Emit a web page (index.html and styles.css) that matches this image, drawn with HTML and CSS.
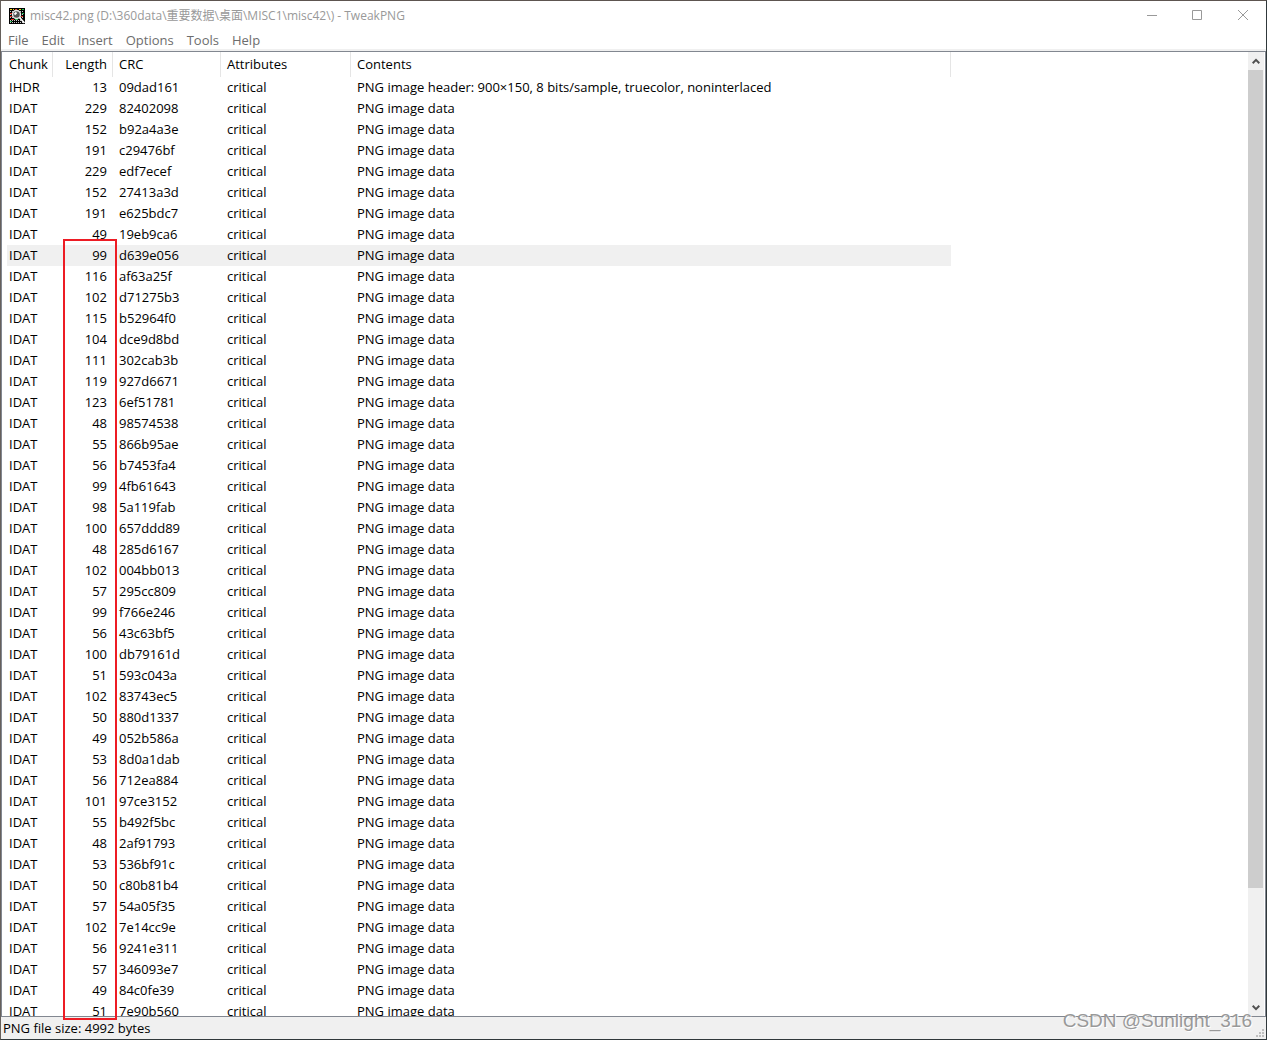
FILE: index.html
```html
<!DOCTYPE html>
<html lang="en">
<head>
<meta charset="utf-8">
<title>misc42.png - TweakPNG</title>
<link rel="stylesheet" href="styles.css">
</head>
<body>
<div class="window">
  <header class="titlebar">
    <svg class="app-icon" width="16" height="16" viewBox="0 0 16 16" shape-rendering="crispEdges" aria-hidden="true">
      <rect width="16" height="16" fill="#000"/>
      <path d="M1 3.500h14M1 6.500h14M1 9.500h14M1 12.500h14M1 14.500h14" stroke="#c8c8c8" stroke-dasharray="1 1"/>
      <path d="M1 1.500h2M4 1.500h1M10 1.500h2" stroke="#f0d820"/>
      <path d="M6 1.500h2M1 5.500h2M1 8.500h2M2 11.500h3M12 8.500h2" stroke="#e83020"/>
      <path d="M13 1.500h2M13 5.500h2M6 11.500h3M1 13.500h2" stroke="#20b850"/>
      <g shape-rendering="auto"><circle cx="7.500" cy="6.500" r="4" fill="#555" stroke="#e8e8e8" stroke-width="1.500"/>
      <path d="M5.500 6.500l2-2M10.500 9.500l5 5.500" fill="none" stroke="#fff" stroke-width="1.800"/></g>
    </svg>
    <h1 class="title">misc42.png (D:\360data\重要数据\桌面\MISC1\misc42\) - TweakPNG</h1>
    <div class="controls">
      <button type="button" aria-label="Minimize"><svg width="11" height="11" viewBox="0 0 11 11"><path d="M1 5.500h10"/></svg></button>
      <button type="button" aria-label="Maximize"><svg width="11" height="11" viewBox="0 0 11 11"><path d="M.5.5h9v9h-9z"/></svg></button>
      <button type="button" aria-label="Close"><svg width="11" height="11" viewBox="0 0 11 11"><path d="M0 0l10 10M10 0L0 10"/></svg></button>
    </div>
  </header>
  <nav class="menu">
    <button type="button">File</button>
    <button type="button">Edit</button>
    <button type="button">Insert</button>
    <button type="button">Options</button>
    <button type="button">Tools</button>
    <button type="button">Help</button>
  </nav>
  <main class="list">
    <div class="rows">
      <table>
        <colgroup><col class="c-chunk"><col class="c-length"><col class="c-crc"><col class="c-attr"><col class="c-contents"></colgroup>
        <thead><tr><th>Chunk</th><th>Length</th><th>CRC</th><th>Attributes</th><th>Contents</th></tr></thead>
        <tbody>
        <tr><td>IHDR<td>13<td>09dad161<td>critical<td>PNG image header: 900×150, 8 bits/sample, truecolor, noninterlaced
        <tr><td>IDAT<td>229<td>82402098<td>critical<td>PNG image data
        <tr><td>IDAT<td>152<td>b92a4a3e<td>critical<td>PNG image data
        <tr><td>IDAT<td>191<td>c29476bf<td>critical<td>PNG image data
        <tr><td>IDAT<td>229<td>edf7ecef<td>critical<td>PNG image data
        <tr><td>IDAT<td>152<td>27413a3d<td>critical<td>PNG image data
        <tr><td>IDAT<td>191<td>e625bdc7<td>critical<td>PNG image data
        <tr><td>IDAT<td>49<td>19eb9ca6<td>critical<td>PNG image data
        <tr class="selected"><td>IDAT<td>99<td>d639e056<td>critical<td>PNG image data
        <tr><td>IDAT<td>116<td>af63a25f<td>critical<td>PNG image data
        <tr><td>IDAT<td>102<td>d71275b3<td>critical<td>PNG image data
        <tr><td>IDAT<td>115<td>b52964f0<td>critical<td>PNG image data
        <tr><td>IDAT<td>104<td>dce9d8bd<td>critical<td>PNG image data
        <tr><td>IDAT<td>111<td>302cab3b<td>critical<td>PNG image data
        <tr><td>IDAT<td>119<td>927d6671<td>critical<td>PNG image data
        <tr><td>IDAT<td>123<td>6ef51781<td>critical<td>PNG image data
        <tr><td>IDAT<td>48<td>98574538<td>critical<td>PNG image data
        <tr><td>IDAT<td>55<td>866b95ae<td>critical<td>PNG image data
        <tr><td>IDAT<td>56<td>b7453fa4<td>critical<td>PNG image data
        <tr><td>IDAT<td>99<td>4fb61643<td>critical<td>PNG image data
        <tr><td>IDAT<td>98<td>5a119fab<td>critical<td>PNG image data
        <tr><td>IDAT<td>100<td>657ddd89<td>critical<td>PNG image data
        <tr><td>IDAT<td>48<td>285d6167<td>critical<td>PNG image data
        <tr><td>IDAT<td>102<td>004bb013<td>critical<td>PNG image data
        <tr><td>IDAT<td>57<td>295cc809<td>critical<td>PNG image data
        <tr><td>IDAT<td>99<td>f766e246<td>critical<td>PNG image data
        <tr><td>IDAT<td>56<td>43c63bf5<td>critical<td>PNG image data
        <tr><td>IDAT<td>100<td>db79161d<td>critical<td>PNG image data
        <tr><td>IDAT<td>51<td>593c043a<td>critical<td>PNG image data
        <tr><td>IDAT<td>102<td>83743ec5<td>critical<td>PNG image data
        <tr><td>IDAT<td>50<td>880d1337<td>critical<td>PNG image data
        <tr><td>IDAT<td>49<td>052b586a<td>critical<td>PNG image data
        <tr><td>IDAT<td>53<td>8d0a1dab<td>critical<td>PNG image data
        <tr><td>IDAT<td>56<td>712ea884<td>critical<td>PNG image data
        <tr><td>IDAT<td>101<td>97ce3152<td>critical<td>PNG image data
        <tr><td>IDAT<td>55<td>b492f5bc<td>critical<td>PNG image data
        <tr><td>IDAT<td>48<td>2af91793<td>critical<td>PNG image data
        <tr><td>IDAT<td>53<td>536bf91c<td>critical<td>PNG image data
        <tr><td>IDAT<td>50<td>c80b81b4<td>critical<td>PNG image data
        <tr><td>IDAT<td>57<td>54a05f35<td>critical<td>PNG image data
        <tr><td>IDAT<td>102<td>7e14cc9e<td>critical<td>PNG image data
        <tr><td>IDAT<td>56<td>9241e311<td>critical<td>PNG image data
        <tr><td>IDAT<td>57<td>346093e7<td>critical<td>PNG image data
        <tr><td>IDAT<td>49<td>84c0fe39<td>critical<td>PNG image data
        <tr><td>IDAT<td>51<td>7e90b560<td>critical<td>PNG image data
        </tbody>
      </table>
    </div>
    <div class="scrollbar">
      <button type="button" aria-label="Scroll up"><svg width="8" height="7" viewBox="0 0 8 7"><path d="M.7 5.200L4 1.900l3.300 3.300"/></svg></button>
      <div class="track"><div class="thumb"></div></div>
      <button type="button" aria-label="Scroll down"><svg width="8" height="7" viewBox="0 0 8 7"><path d="M.7 1.800L4 5.100l3.300-3.300"/></svg></button>
    </div>
  </main>
  <footer class="status">
    <span>PNG file size: 4992 bytes</span>
    <svg width="9" height="9" viewBox="0 0 9 9" shape-rendering="crispEdges" aria-hidden="true"><path fill="#bfbfbf" d="M6 0h2v2H6zM3 3h2v2H3zM6 3h2v2H6zM0 6h2v2H0zM3 6h2v2H3zM6 6h2v2H6z"/></svg>
  </footer>
  <div class="highlight"></div>
  <div class="watermark">CSDN @Sunlight_316</div>
</div>
</body>
</html>
```
FILE: styles.css
```css
* { box-sizing: border-box; }

body {
  margin: 0;
  font: 13px/20px "Open Sans", "Noto Sans CJK SC", sans-serif;
  color: #000;
}

button {
  padding: 0;
  border: 0;
  background: none;
  font: inherit;
  color: inherit;
}

svg { display: block; }

.window {
  position: relative;
  display: flex;
  flex-direction: column;
  height: 100vh;
  border: 1px solid #30383b;
  border-top-color: #5d5550;
  border-left-color: #66605c;
  background: #fff;
  overflow: hidden;
}

.titlebar {
  display: flex;
  align-items: center;
  height: 29px;
  padding: 0 0 0 8px;
  color: #999;
}

.title {
  flex: 1;
  margin: 0 0 0 5px;
  font-size: 12px;
  font-weight: 400;
}

.controls { display: flex; }

.controls button {
  display: grid;
  place-items: center;
  width: 46px;
  height: 29px;
}

.controls path {
  fill: none;
  stroke: #999;
}

.menu {
  display: flex;
  gap: 13px;
  height: 21px;
  padding-left: 7px;
  border-bottom: 2px solid #f0f0f0;
  color: #6d6d6d;
}

.list {
  display: flex;
  flex: 1;
  min-height: 0;
  border: 1px solid #828790;
  padding-right: 1px;
}

.rows {
  flex: 1;
  padding-left: 5px;
  overflow: hidden;
}

table {
  table-layout: fixed;
  width: 944px;
  border-collapse: separate;
  border-spacing: 0;
}

.c-chunk { width: 46px; }
.c-length { width: 60px; }
.c-crc { width: 108px; }
.c-attr { width: 130px; }
.c-contents { width: 600px; }

th,
td {
  height: 21px;
  padding: 0 6px;
  line-height: 21px;
  font-weight: 400;
  text-align: left;
  white-space: nowrap;
}

th {
  height: 25px;
  padding-right: 5px;
  border-right: 1px solid #e5e5e5;
}

th:first-child,
td:first-child { padding: 0 0 0 2px; }

th:nth-child(2),
td:nth-child(2) { text-align: right; }

.selected td { background: #f0f0f0; }

.scrollbar {
  display: flex;
  flex-direction: column;
  width: 16px;
  padding-top: 1px;
  background: #f0f0f0;
}

.scrollbar button {
  display: grid;
  place-items: center;
  height: 17px;
}

.scrollbar path {
  fill: none;
  stroke: #505050;
  stroke-width: 2;
}

.track { flex: 1; }

.thumb {
  width: 15px;
  height: 88%;
  background: #cdcdcd;
}

.status {
  display: flex;
  align-items: flex-end;
  justify-content: space-between;
  height: 22px;
  padding: 0 1px 1px 2px;
  background: #f0f0f0;
}

/* Frame drawn over the length values */
.highlight {
  position: absolute;
  top: 238px;
  bottom: 19px;
  left: 62px;
  width: 54px;
  border: 2px solid #ed1c24;
}

.watermark {
  position: absolute;
  right: 14px;
  bottom: 6px;
  font: 19px/24px "Liberation Sans", sans-serif;
  color: #999;
  text-shadow: 1px 1px 0 #fff;
}
```
